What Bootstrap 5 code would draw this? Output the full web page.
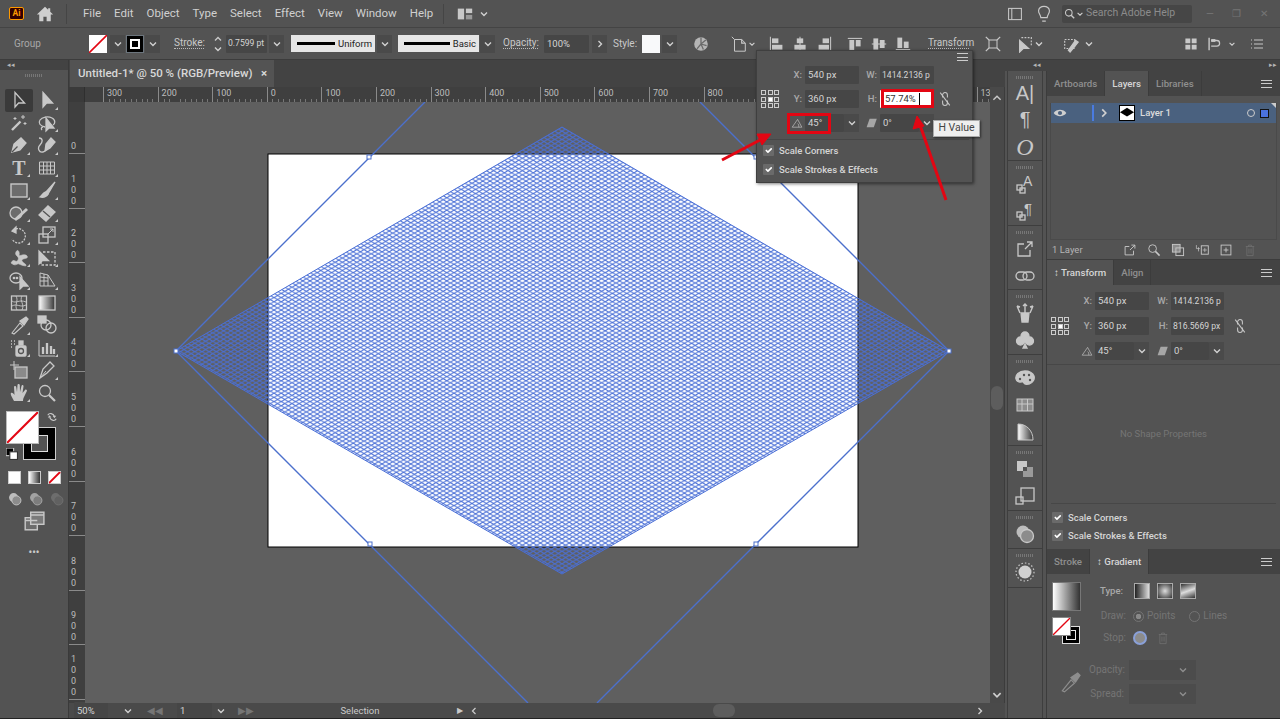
<!DOCTYPE html>
<html lang="en"><head><meta charset="utf-8"><title>Adobe Illustrator</title>
<link href="https://cdn.jsdelivr.net/npm/bootstrap@5.3.0/dist/css/bootstrap.min.css" rel="stylesheet">
<style>
html,body{margin:0;background:#535353}
body{font-family:Roboto,"Liberation Sans",sans-serif;font-size:10px;color:#c9c9c9;line-height:1;overflow:hidden}
.app{position:relative;width:1280px;height:719px;overflow:hidden;background:#535353;border-bottom:1px solid #222}
.flex-none{flex:none}
svg{display:block;flex:none}
.i{width:20px;height:20px;fill:none;stroke:#c8c8c8;stroke-width:1.3;color:#c8c8c8}
.s12{width:12px;height:12px}.s14{width:14px;height:14px}.s16{width:16px;height:16px}.s18{width:18px;height:18px}.s22{width:22px;height:22px}.s10{width:10px;height:10px}.s8{width:8px;height:8px}
.menubar{height:28px;border-bottom:1px solid #444}
.menu{font-size:11.5px;color:#d0d0d0}
.menu+.menu{margin-left:13px}
.logo{width:15px;height:13px;background:#330000;color:#ff9a00;border:1px solid #ff9a00;border-radius:2px;font-size:8.5px;font-weight:700;margin-left:9px}
.vsep{width:1px;height:20px;background:#454545}
.search{width:130px;height:18px;background:#464646;border-radius:2px;color:#8c8c8c;font-size:10.5px}
.winb{width:88px;padding:0 12px 0 14px}
.ctl{height:32px;border-bottom:1px solid #3c3c3c;font-size:10px}
.dots{border-bottom:1px dotted #bbb}
.fld{background:#464646;color:#d5d5d5;height:18px;border-radius:1px;padding:0 2px 0 3px;font-size:9.5px;white-space:nowrap;overflow:hidden}
.fld.fs9{font-size:8.6px;padding:0 1px 0 2px}
.chev{width:15px;height:18px;background:#4a4a4a}
.sw{width:18px;height:18px;background:#fff}
.stk{height:17px;background:#e6e6e6;color:#222;padding:0 3px 0 6px;font-size:9.5px}
.stk i{display:block;height:3px;background:#000;width:38px}
.stk i.wl{width:46px}
.ml1{margin-left:1px}.ml2{margin-left:2px}.ml3{margin-left:3px}.ml4{margin-left:4px}.ml5{margin-left:5px}.ml6{margin-left:6px}.ml7{margin-left:7px}.ml8{margin-left:8px}.ml9{margin-left:9px}.ml10{margin-left:10px}.ml12{margin-left:12px}.ml14{margin-left:14px}.ml15{margin-left:15px}.ml16{margin-left:16px}.ml17{margin-left:17px}.ml18{margin-left:18px}.ml21{margin-left:21px}.ml25{margin-left:25px}.ml40{margin-left:40px}.ml49{margin-left:49px}
.w15{width:15px}.w24{width:24px}.w26{width:26px}.w30{width:30px}.w34{width:34px}.w35{width:35px}.w41{width:41px}.w45{width:45px}.w81{width:81px}.w84{width:84px}
.main{height:658px}
.tools{width:69px;border-right:1px solid #3a3a3a;background:#535353}
.collapse-bar{height:10px;font-size:7px;color:#b5b5b5;padding:2px 0 0 7px;background:#434343}
.grip{height:3px;width:18px;margin:0 auto;background:repeating-linear-gradient(90deg,#777 0 1px,transparent 1px 2px)}
.tgrid{display:grid;grid-template-columns:28px 28px;grid-auto-rows:22.5px;padding:12px 0 0 5px}
.tc{position:relative;display:flex;align-items:center;justify-content:center}
.tc.on{background:#3a3a3a;border-radius:2px}
.tc.m::after{content:"";position:absolute;right:3px;bottom:2px;border-left:3px solid transparent;border-bottom:3px solid #c8c8c8}
.fs{position:relative;height:54px;margin:7px 0 0 0}
.fs .f{position:absolute;left:6px;top:0;width:33px;height:33px;background:#fff;border:1px solid #bbb;z-index:2}
.fs .k{position:absolute;left:23px;top:16px;width:33px;height:33px;background:#000;border:1px solid #ccc}
.fs .k::after{content:"";position:absolute;inset:7px;background:#535353;border:1px solid #ddd}
.fs .d{position:absolute;left:6px;top:37px;width:11px;height:11px}
.fs .w{position:absolute;left:46px;top:0}
.modes{padding-left:8px;gap:7px}
.mt6px{margin-top:6px}.mt7px{margin-top:7px}.mt3px{margin-top:3px}.mt13px{margin-top:13px}
.mbox{width:13px;height:13px;border:1px solid #ccc}
.mid{background:linear-gradient(90deg,#fff,#333)}
.doc{width:936px;flex:none}
.inner{width:921px;flex:none}
.doctab{height:27px;background:#434343}
.tab-a{width:204px;margin-left:1px;background:#535353;color:#d8d8d8;font-size:11.5px;font-weight:500;padding:0 7px 0 8px;white-space:nowrap}
.ruler-h{height:15px;background:#3f3f3f;overflow:hidden;font-size:9px;color:#bdbdbd}
.corner{width:16px;flex:none;background:#3a3a3a;border-right:1px solid #2f2f2f}
.hpad{width:18px;flex:none}
.hcell{flex:none;width:54.6px;padding:2px 0 0 3px;height:15px;border-left:1px solid #8a8a8a;background:repeating-linear-gradient(90deg,transparent 0 4.5px,#777 4.5px 5.5px) 0 12px/100% 3px no-repeat}
.ruler-v{width:16px;background:#3f3f3f;overflow:hidden;font-size:9px;color:#bdbdbd;flex:none}
.vcell{height:54.6px;border-bottom:1px solid #8a8a8a;padding:0 9px 1px 2px;text-align:center;line-height:11px;flex:none}
.vcell:first-child{height:52px}
.canvas{position:relative;width:905px;flex:none;background:#5f5f5f;overflow:hidden}
.canvas svg{position:absolute;left:0;top:0}
.scroll{width:15px;background:#494949;padding-top:5px;border-right:1px solid #3c3c3c}
.thumb{width:12px;height:24px;margin:282px auto 0;border-radius:6px;background:#5d5d5d}
.sdn{margin:279px auto 0}
.status{height:15px;background:#4a4a4a;font-size:9.5px;color:#c9c9c9}
.selz{width:203px;padding-left:9px;text-align:center}
.sp1{width:234px;flex:none}.sp2{width:240px;flex:none}
.hthumb{width:22px;height:13px;border-radius:6px;background:#5d5d5d;flex:none}
.dock{width:275px}
.dockhead{height:11px;background:#434343;font-size:7px;color:#b5b5b5;padding:2px 3px 0 0}
.strip{width:36px;margin:0 3px 0 2px;border-left:1px solid #3e3e3e;border-right:1px solid #3e3e3e}
.sg{border-bottom:1px solid #3e3e3e;padding-top:5px;gap:7px}
.sg .grip{margin-bottom:-2px}
.h90{height:90px;gap:6px}.h65{height:65px}.h64{height:64px}.h91{height:91px}.h38{height:38px}.h39{height:39px}
.glyph{font-family:"Liberation Serif",serif;color:#c8c8c8;line-height:1}
.gl2{font-family:"Liberation Sans",sans-serif;font-size:20px;color:#c8c8c8;line-height:1}
.panels{width:234px;border-left:1px solid #3c3c3c}
.nav.pt{height:25px;background:#434343;flex-wrap:nowrap;font-size:9.7px}
.pt .nav-link{padding:0 7px;height:25px;display:flex;align-items:center;color:#8f8f8f;font-weight:500;border-right:1px solid #3c3c3c;border-radius:0}
.pt .nav-link.active{background:#535353;color:#d6d6d6}
.burger{width:11px;height:8px;border-top:1px solid #ccc;border-bottom:1px solid #ccc;position:relative}
.burger::after{content:"";position:absolute;left:0;right:0;top:2.5px;border-top:1px solid #ccc}
.lay{height:189px;border-bottom:1px solid #3c3c3c}
.laylist{height:137px;margin:7px 3px 0 3px;border:1px solid #4a4a4a;border-top:0}
.layrow{position:relative;height:20px;background:#4a617f;color:#dcdcdc;font-size:9.5px;font-weight:500}
.layrow::after{content:"";position:absolute;right:0;top:0;border-left:5px solid transparent;border-top:5px solid #ccc}
.bar{width:2px;height:16px;background:#4a7be0}
.thumb2{width:16px;height:16px;border:1px solid #000;background:#fff}
.sel-o{width:8px;height:8px;border:1px solid #ccc;border-radius:50%}
.sel-s{width:9px;height:9px;background:#4a72df;border:1px solid #111;margin-right:7px}
.layfoot{height:19px;font-size:9.5px;color:#b5b5b5}
.tfgrid{display:grid;grid-template-columns:16px 54px 22px 53px;grid-auto-rows:18px;row-gap:7px;align-items:center}
.lab{text-align:right;padding-right:3px;font-size:9.5px;color:#a9a9a9;font-weight:500}
.lab2{display:flex;justify-content:flex-end;align-items:center;padding-right:2px}
.refp{display:grid;grid-template-columns:repeat(3,5px);grid-auto-rows:5px;gap:1.5px;width:18px}
.refp b{display:block;border:1px solid #ccc}
.refp b.c{background:#fff}
.tf{height:289px}
.tfrow{padding:7px 0 0 4px}
.hr1{border-top:1px solid #474747}
.nsp{height:138px;color:#757575;font-size:9.5px}
.chk{gap:5px;font-size:9.5px;color:#d5d5d5;font-weight:500}
.form-check-input.ck{width:11px;height:11px;margin:0;background-color:#6a6a6a;border:0;border-radius:1px;flex:none;opacity:1}
.gr{height:169px}
.gswatch{width:29px;height:29px;background:linear-gradient(90deg,#fff,#333);border:1px solid #777}
.fs2{position:relative;height:28px;margin-top:6px;width:30px}
.fs2 .f{position:absolute;left:0;top:0;width:19px;height:19px;background:#fff;border:1px solid #888;z-index:2}
.fs2 .k{position:absolute;left:10px;top:9px;width:18px;height:18px;background:#000;border:1px solid #ddd}
.fs2 .k::after{content:"";position:absolute;inset:3px;border:1px solid #eee}
.tbtn{width:16px;height:16px;border:1px solid #aaa;margin-right:7px}
.t1{background:linear-gradient(90deg,#222,#ddd)}.t2{background:radial-gradient(#ddd,#333)}.t3{background:linear-gradient(160deg,#333,#ddd 50%,#333)}
.dim{color:#757575}
.rad{width:11px;height:11px;border-radius:50%;border:1px solid #747474}
.rad.on{background:radial-gradient(#8a8a8a 0 2.5px,transparent 3px)}
.stop{width:14px;height:14px;border-radius:50%;border:2px solid #8aa0d8;background:#8c8c8c}
.sel{width:67px;height:20px;background:#4c4c4c;padding-right:8px}
.grow{height:18px}
.dropbox{padding-left:12px}
/* popup */
.pop{position:absolute;left:756px;top:50px;width:217px;height:133px;background:#535353;border:1px solid #3f3f3f;box-shadow:1px 1px 3px rgba(0,0,0,.5);z-index:5}
.pophead{height:15px;padding:2px 4px 0 0}
.popgrid{grid-template-columns:12px 54px 21px 54px;row-gap:6px}
.pophr{margin:7px 3px 5px 3px;border-top:1px solid #474747}
.hot{position:relative}
.h-in{background:#fff;color:#333;padding-left:5px}
.h-in::after{content:"";position:absolute;right:14px;top:3px;bottom:3px;width:1px;background:#000}
.redbox{position:absolute;border:3px solid #e30613;z-index:6}
.rb1{left:787px;top:113px;width:44px;height:21px}
.rb2{left:881px;top:89px;width:53px;height:19px}
.tip{position:absolute;left:933px;top:120px;width:47px;height:17px;background:#eee;color:#444;font-size:10.5px;border:1px solid #aaa;box-shadow:1px 1px 2px rgba(0,0,0,.5);z-index:8}
.ann{position:absolute;left:0;top:0;z-index:7;pointer-events:none}
.nowrap{white-space:nowrap}
.grp{color:#a8a8a8}
.svgt{font-family:"Liberation Sans",sans-serif;fill:#c8c8c8;stroke:none}
</style></head><body>
<svg width="0" height="0" style="position:absolute"><defs>
<linearGradient id="g1"><stop offset="0" stop-color="#fff"/><stop offset="1" stop-color="#333"/></linearGradient>
<symbol id="chev" viewBox="0 0 10 10"><path d="M2 3.500 5 6.500 8 3.500" fill="none" stroke="#d0d0d0" stroke-width="1.400"/></symbol>
<symbol id="chr" viewBox="0 0 10 10"><path d="M3.500 2 6.500 5 3.500 8" fill="none" stroke="#d0d0d0" stroke-width="1.400"/></symbol>
<symbol id="home" viewBox="0 0 20 20"><path d="M10 2 1 10.500h2.600V18h4.600v-5h3.600v5h4.600v-7.500H19L15.800 7.500V3.500h-2.300v1.900z" fill="#cfcfcf" stroke="none"/></symbol>
<symbol id="arrO" viewBox="0 0 20 20"><path d="M6 2.500V17l3.600-4h6z"/></symbol>
<symbol id="arrF" viewBox="0 0 20 20"><path d="M6 2.500V17l3.600-4h6z" fill="#c8c8c8"/></symbol>
<symbol id="wand" viewBox="0 0 20 20"><path d="M3 17 11.500 8.500" stroke-width="2.400"/><path d="M14 2v4M12 4h4M6 4v3M4.500 5.500h3M16 9v3M14.500 10.500h3" stroke-width="1"/></symbol>
<symbol id="lasso" viewBox="0 0 20 20"><path d="M8 14C3 13 1 10 3 7s8-4 12-2 3 6 1 7M6 14c-2 0-2 2-1 3"/><path d="M9 5v13l3-3h5z" fill="#c8c8c8"/></symbol>
<symbol id="pen" viewBox="0 0 20 20"><path d="M3 17 5 9l7-6 5 5-6 7z" fill="#c8c8c8"/><path d="M3 17 8.500 11.500" stroke="#535353"/></symbol>
<symbol id="curv" viewBox="0 0 20 20"><path d="M8 16 9 9l5-6 4 4-5 6z" fill="#c8c8c8"/><path d="M2 3c4 0 4 4 1 7s-1 8 3 7 2-3 4-3" /></symbol>
<symbol id="table" viewBox="0 0 20 20"><path d="M2.500 4h15v12h-15zM2.500 8h15M2.500 12h15M6.500 4v12M10 4v12M13.500 4v12" stroke-width="1"/></symbol>
<symbol id="rect" viewBox="0 0 20 20"><rect x="2" y="4" width="16" height="13" fill="#6c6c6c" stroke-width="1.400"/></symbol>
<symbol id="brush" viewBox="0 0 20 20"><path d="M18 2 9 12l2 2z" fill="#c8c8c8"/><path d="M9 12c-3 0-3 3-6 5 3 1 7 0 8-3z" fill="#c8c8c8"/></symbol>
<symbol id="shaper" viewBox="0 0 20 20"><circle cx="7" cy="10" r="6" fill="#6c6c6c"/><path d="M6 17 18 6" stroke-width="3"/></symbol>
<symbol id="eraser" viewBox="0 0 20 20"><path d="M2 12 11 3l7 6-9 9z" fill="#c8c8c8"/><path d="M6 8l7 6" stroke="#535353"/></symbol>
<symbol id="rot" viewBox="0 0 20 20"><path d="M4 5C10 1 18 6 16 13s-10 6-13 1" stroke-dasharray="2 1.200"/><path d="M7 2 3 6l4 2z" fill="#c8c8c8"/></symbol>
<symbol id="scale" viewBox="0 0 20 20"><rect x="6" y="2" width="12" height="10"/><rect x="2" y="9" width="9" height="9"/><path d="M11 9l5-5M13 4h3v3" stroke-width="1"/></symbol>
<symbol id="warp" viewBox="0 0 20 20"><path d="M2 15c3-6 5 1 7-3s-4-4-2-8 4 1 3 3 6-2 8 1-4 2-5 4 3 3 4 5-5 0-7-1-3 3-8-1z" fill="#c8c8c8" stroke-width=".6"/></symbol>
<symbol id="free" viewBox="0 0 20 20"><path d="M6 4h12v13H4V12" stroke-dasharray="2.500 1.500"/><path d="M2 3v13l3.500-3.500h6z" fill="#c8c8c8"/></symbol>
<symbol id="shape" viewBox="0 0 20 20"><ellipse cx="7" cy="8" rx="6" ry="5"/><circle cx="5" cy="8" r=".7"/><circle cx="8" cy="8" r=".7"/><path d="M11 7v12l3-3h5z" fill="#c8c8c8"/></symbol>
<symbol id="persp" viewBox="0 0 20 20"><path d="M3 3 11 5V16H3zM3 7 11 8M3 11h8M7 4v12M11 5 18 16H11" stroke-width="1"/></symbol>
<symbol id="mesh" viewBox="0 0 20 20"><rect x="2.500" y="3" width="15" height="14" stroke-width="1.300"/><path d="M3 8c4 3 7-2 14 1M3 13c5-3 8 2 14-1M7 3c3 5-2 9 1 14M13 3c-3 5 3 8 0 14" stroke-width=".9"/></symbol>
<symbol id="grad" viewBox="0 0 20 20"><rect x="2" y="3" width="16" height="14" fill="url(#g1)"/></symbol>
<symbol id="drop" viewBox="0 0 20 20"><path d="M3 18 11 8l3 3-9 8z" stroke-width="1.100"/><path d="M11 6 17 2l2 2-4 6z" fill="#c8c8c8"/></symbol>
<symbol id="blend" viewBox="0 0 20 20"><rect x="1" y="1" width="8" height="7" fill="#c8c8c8"/><circle cx="9" cy="10" r="5"/><circle cx="14" cy="13" r="5"/></symbol>
<symbol id="spray" viewBox="0 0 20 20"><rect x="7" y="8" width="10" height="10" rx="1" fill="#c8c8c8"/><circle cx="12" cy="13" r="2.500" stroke="#535353"/><rect x="10" y="3" width="4" height="4" fill="#c8c8c8"/><path d="M2 3h1M5 3h1M2 6h1M5 6h1M2 9h1" stroke-width="1.400"/></symbol>
<symbol id="graph" viewBox="0 0 20 20"><path d="M2 2v16h16" stroke-width="1"/><path d="M6 16V9M10 16V5M14 16V8M17 16v-5" stroke-width="2.300"/></symbol>
<symbol id="abd" viewBox="0 0 20 20"><rect x="6" y="7" width="12" height="11" fill="#8a8a8a"/><path d="M5 1v9M1 5h9" stroke-width="1"/></symbol>
<symbol id="slice" viewBox="0 0 20 20"><path d="M3 18 6 9l7-7 4 4-7 7z"/><path d="M3 18 9 11" stroke-width="1"/></symbol>
<symbol id="hand" viewBox="0 0 20 20"><path d="M5 18C3 14 1 11 2 10s3 1 3.500 2L5 4c0-1.500 2-1.500 2.200 0L8 9l.5-7c0-1.500 2.200-1.500 2.300 0L11 9l1.500-6c.4-1.500 2.300-1 2 .5L13.500 10l2.500-3c1-1 2.500 0 1.800 1.300L15 14c-1 2-1 3-1 4z" fill="#c8c8c8" stroke="none"/></symbol>
<symbol id="zoom" viewBox="0 0 20 20"><circle cx="8" cy="8" r="5.500"/><path d="M12 12 18 18" stroke-width="2.200"/></symbol>
<symbol id="swap" viewBox="0 0 20 20"><path d="M3 7C5 3 12 3 14 9M17 13c-2 4-8 4-11-2" stroke-width="2"/><path d="M11 8h6l-3 4zM9 11H3l3-4z" fill="#c8c8c8" stroke="none"/></symbol>
<symbol id="screen" viewBox="0 0 20 20"><rect x="2" y="7" width="11" height="11" fill="#6c6c6c"/><rect x="7" y="2" width="12" height="11" fill="#7a7a7a"/><path d="M2 9.500h11M7 4.500h12"/></symbol>
<symbol id="link" viewBox="0 0 20 20"><path d="M7 8V5a3 3 0 0 1 6 0v3M7 12v3a3 3 0 0 0 6 0v-3" stroke-width="1.300"/><path d="M4 2 16 18" stroke-width="1.300"/></symbol>
<symbol id="layA" viewBox="0 0 20 20"><rect x="2" y="11" width="5" height="5"/><rect x="5" y="14" width="5" height="5"/><text class="svgt" x="8" y="12" font-size="14">A</text></symbol>
<symbol id="layP" viewBox="0 0 20 20"><rect x="2" y="11" width="5" height="5"/><rect x="5" y="14" width="5" height="5"/><text class="svgt" x="9" y="13" font-size="15">&#182;</text></symbol>
<symbol id="popout" viewBox="0 0 20 20"><path d="M15 11v6H3V5h6M10 10 17 3M12 3h5v5" stroke-width="1.300"/></symbol>
<symbol id="chain" viewBox="0 0 20 20"><rect x="1" y="6" width="11" height="8" rx="4"/><rect x="8" y="6" width="11" height="8" rx="4"/></symbol>
<symbol id="puppet" viewBox="0 0 20 20"><path d="M6 10h8l-1 9H7z" fill="#c8c8c8"/><path d="M5 10 2 3M10 10V1M15 10l3-7M2 3l3 1M18 3l-3 1M8 3l2-2 2 2" stroke-width="1.400"/></symbol>
<symbol id="club" viewBox="0 0 20 20"><circle cx="10" cy="6" r="4" fill="#c8c8c8"/><circle cx="5.500" cy="11" r="4" fill="#c8c8c8"/><circle cx="14.500" cy="11" r="4" fill="#c8c8c8"/><path d="M10 8v6l-2 4h4l-2-4" fill="#c8c8c8"/></symbol>
<symbol id="palette" viewBox="0 0 20 20"><path d="M10 3C4 3 0 7 1 11c.5 3 5 4 7 2 1 3 3 4 6 3 4-1 6-5 5-8s-5-5-9-5z" fill="#c8c8c8"/><circle cx="5" cy="11" r="1.200" fill="#535353" stroke="none"/><circle cx="9" cy="7" r="1.200" fill="#535353" stroke="none"/><circle cx="14" cy="7" r="1.200" fill="#535353" stroke="none"/><circle cx="15" cy="12" r="1.200" fill="#535353" stroke="none"/></symbol>
<symbol id="swatch" viewBox="0 0 20 20"><rect x="2" y="4" width="16" height="12" fill="#8c8c8c" stroke-width="1"/><path d="M2 9h16M7 4v12M12.500 4v12" stroke-width="1"/></symbol>
<symbol id="quarter" viewBox="0 0 20 20"><path d="M3 2v16h15C18 9 12 2 3 2z" fill="url(#g1)" stroke-width="1"/></symbol>
<symbol id="over" viewBox="0 0 20 20"><rect x="2" y="2" width="10" height="10" fill="#c8c8c8" stroke="none"/><rect x="8" y="8" width="10" height="10" fill="#9a9a9a" stroke="none"/><rect x="8" y="8" width="4" height="4" fill="#535353" stroke="none"/></symbol>
<symbol id="ab2" viewBox="0 0 20 20"><rect x="6" y="2" width="13" height="13"/><rect x="1" y="11" width="7" height="7" /></symbol>
<symbol id="circ" viewBox="0 0 20 20"><circle cx="8" cy="8" r="6.500" fill="#bdbdbd" stroke="none"/><circle cx="12" cy="12" r="6.500" fill="#8c8c8c" stroke="#c8c8c8"/></symbol>
<symbol id="sun" viewBox="0 0 20 20"><circle cx="10" cy="10" r="6.500" fill="#d0d0d0" stroke="none"/><circle cx="10" cy="10" r="9" stroke-dasharray="1.500 2" stroke-width="1.200"/></symbol>
<symbol id="trash" viewBox="0 0 20 20"><path d="M4 5h12M8 5V3h4v2M5.500 5v13h9V5M8.500 8v7M11.500 8v7" stroke-width="1.100"/></symbol>
<symbol id="newl" viewBox="0 0 20 20"><rect x="3" y="3" width="14" height="14"/><path d="M10 6.500v7M6.500 10h7"/></symbol>
<symbol id="subl" viewBox="0 0 20 20"><rect x="9" y="4" width="10" height="12"/><path d="M14 7v6M11 10h6M2 3v5h5M5 6v6" stroke-width="1"/></symbol>
<symbol id="clip" viewBox="0 0 20 20"><rect x="2" y="2" width="11" height="11" fill="#8c8c8c"/><rect x="7" y="7" width="11" height="11"/></symbol>
<symbol id="panelw" viewBox="0 0 20 20"><rect x="2" y="3" width="16" height="14"/><path d="M6 3v14" /></symbol>
<symbol id="bulb" viewBox="0 0 20 20"><path d="M6.500 14C6 10 3.500 9.500 4 6c.5-3 3-4.500 6-4.500S15.500 3 16 6c.5 3.500-2 4-2.500 8zM8 18h4" stroke-width="1.300"/></symbol>
<symbol id="mag" viewBox="0 0 20 20"><circle cx="8" cy="8" r="5.500" stroke-width="1.800"/><path d="M12 12 17 17" stroke-width="2.300"/></symbol>
<symbol id="globe" viewBox="0 0 20 20"><circle cx="10" cy="10" r="8.500" fill="#b5b5b5" stroke="none"/><path d="M10 2v8M10 10l6-5M10 10l7 2M10 10l3 7M10 10l-5 6" stroke="#6a6a6a" stroke-width="1.600"/></symbol>
<symbol id="docic" viewBox="0 0 20 20"><path d="M5 5h8l4 4v9H5zM2 2l3 3" stroke-width="1.100"/><path d="M13 5v4h4"/></symbol>
<symbol id="al1" viewBox="0 0 20 20"><path d="M3 1v18" stroke-width="1.300"/><rect x="5" y="3" width="8" height="6" fill="#c8c8c8" stroke="none"/><rect x="5" y="11" width="13" height="6" fill="#c8c8c8" stroke="none"/></symbol>
<symbol id="al2" viewBox="0 0 20 20"><path d="M10 1v18" stroke-width="1.300"/><rect x="6" y="3" width="8" height="6" fill="#c8c8c8" stroke="none"/><rect x="3" y="11" width="14" height="6" fill="#c8c8c8" stroke="none"/></symbol>
<symbol id="al3" viewBox="0 0 20 20"><path d="M17 1v18" stroke-width="1.300"/><rect x="7" y="3" width="8" height="6" fill="#c8c8c8" stroke="none"/><rect x="2" y="11" width="13" height="6" fill="#c8c8c8" stroke="none"/></symbol>
<symbol id="al4" viewBox="0 0 20 20"><path d="M1 3h18" stroke-width="1.300"/><rect x="3" y="5" width="6" height="13" fill="#c8c8c8" stroke="none"/><rect x="11" y="5" width="6" height="8" fill="#c8c8c8" stroke="none"/></symbol>
<symbol id="al5" viewBox="0 0 20 20"><path d="M1 10h18" stroke-width="1.300"/><rect x="3" y="3" width="6" height="14" fill="#c8c8c8" stroke="none"/><rect x="11" y="5" width="6" height="10" fill="#c8c8c8" stroke="none"/></symbol>
<symbol id="al6" viewBox="0 0 20 20"><path d="M1 17h18" stroke-width="1.300"/><rect x="3" y="2" width="6" height="13" fill="#c8c8c8" stroke="none"/><rect x="11" y="7" width="6" height="8" fill="#c8c8c8" stroke="none"/></symbol>
<symbol id="tf1" viewBox="0 0 20 20"><rect x="5" y="5" width="10" height="10"/><path d="M1 1l4 4M19 1l-4 4M1 19l4-4M19 19l-4-4" stroke-width="1.500"/></symbol>
<symbol id="tf2" viewBox="0 0 20 20"><path d="M6 3h11v9" stroke-dasharray="2 1.500"/><path d="M4 6v13l4-4h6z" fill="#c8c8c8"/></symbol>
<symbol id="tf3" viewBox="0 0 20 20"><rect x="3" y="5" width="11" height="10" stroke-dasharray="2 1.500"/><path d="M7 17l8-11 3 2-9 11z" fill="#c8c8c8"/></symbol>
<symbol id="g4" viewBox="0 0 20 20"><path d="M9 2v7H2V2zM18 2v7h-7V2zM9 11v7H2v-7zM18 11v7h-7v-7z" fill="#c8c8c8" stroke="none"/></symbol>
<symbol id="g5" viewBox="0 0 20 20"><path d="M3 1v18" stroke-width="2"/><rect x="6" y="3" width="6" height="4" fill="#c8c8c8" stroke="none"/><path d="M6 5h8a4 4 0 0 1 0 8H6" stroke-width="1.800"/></symbol>
<symbol id="eye" viewBox="0 0 20 20"><path d="M1 10c4-6 14-6 18 0-4 6-14 6-18 0z" fill="#cfcfcf" stroke="none"/><circle cx="10" cy="10" r="3" fill="#4a617f" stroke="none"/></symbol>
<symbol id="lw" viewBox="0 0 20 20"><rect x="2" y="4" width="7" height="12" fill="#c8c8c8" stroke="none"/><rect x="11" y="4" width="7" height="5" fill="#c8c8c8" stroke="none"/><rect x="11" y="11" width="7" height="5" fill="#999" stroke="none"/></symbol>
<symbol id="anglei" viewBox="0 0 20 20"><path d="M2 17h16L11 4zM11 11c2 1 2 4 2 6" stroke-width="1.100"/></symbol>
<symbol id="sheari" viewBox="0 0 20 20"><path d="M6 3h12l-5 14H1z" fill="#a6a6a6" stroke="none"/></symbol>
</defs></svg>

<div class="app d-flex flex-column">
 <!-- menu bar -->
 <div class="menubar d-flex align-items-center flex-none">
  <div class="logo d-flex align-items-center justify-content-center">Ai</div>
  <svg class="i s18 ml12"><use href="#home"/></svg>
  <div class="vsep ml12"></div>
  <div class="d-flex ml16"><span class="menu">File</span><span class="menu">Edit</span><span class="menu">Object</span><span class="menu">Type</span><span class="menu">Select</span><span class="menu">Effect</span><span class="menu">View</span><span class="menu">Window</span><span class="menu">Help</span></div>
  <div class="vsep ml10"></div>
  <svg class="i s18 ml12"><use href="#lw"/></svg>
  <svg class="i s10 ml5"><use href="#chev"/></svg>
  <div class="flex-grow-1"></div>
  <svg class="i s16"><use href="#panelw"/></svg>
  <svg class="i s18 ml12"><use href="#bulb"/></svg>
  <div class="search d-flex align-items-center ml9"><svg class="i s12 ml2"><use href="#mag"/></svg><svg class="i s8"><use href="#chev"/></svg><span class="ml2">Search Adobe Help</span></div>
  <div class="winb d-flex align-items-center justify-content-between dim"><span>&#8212;</span><span>&#10064;</span><span>&#10005;</span></div>
 </div>
 <!-- control bar -->
 <div class="ctl d-flex align-items-center flex-none">
  <span class="ml14 w26 grp text-nowrap">Group</span>
  <div class="sw ml49"><svg viewBox="0 0 18 18" class="s18"><path d="M0 18 18 0" stroke="#e30613" stroke-width="1.600"/></svg></div>
  <div class="chev ml3 d-flex align-items-center justify-content-center"><svg class="i s10"><use href="#chev"/></svg></div>
  <div class="sw ml1 d-flex align-items-center justify-content-center bg-black border border-secondary"><svg viewBox="0 0 10 10" class="s10"><rect x="1" y="1" width="8" height="8" fill="none" stroke="#fff" stroke-width="2"/></svg></div>
  <div class="chev ml1 d-flex align-items-center justify-content-center"><svg class="i s10"><use href="#chev"/></svg></div>
  <span class="ml14 w30 dots">Stroke:</span>
  <div class="ml6 w15 d-flex flex-column align-items-center"><svg class="i s10" viewBox="0 0 10 10" ><path d="M2 6.500 5 3.500 8 6.500" stroke-width="1.400"/></svg><svg class="i s10"><use href="#chev"/></svg></div>
  <div class="fld fs9 ml1 w41 d-flex align-items-center">0.7599 pt</div>
  <div class="chev ml2 d-flex align-items-center justify-content-center"><svg class="i s10"><use href="#chev"/></svg></div>
  <div class="stk ml7 w84 d-flex align-items-center justify-content-between"><i></i><span>Uniform</span></div>
  <div class="chev ml2 d-flex align-items-center justify-content-center"><svg class="i s10"><use href="#chev"/></svg></div>
  <div class="stk ml6 w81 d-flex align-items-center justify-content-between"><i class="wl"></i><span>Basic</span></div>
  <div class="chev ml1 d-flex align-items-center justify-content-center"><svg class="i s10"><use href="#chev"/></svg></div>
  <span class="ml8 w35 dots">Opacity:</span>
  <div class="fld ml6 w45 d-flex align-items-center">100%</div>
  <div class="chev ml3 d-flex align-items-center justify-content-center"><svg class="i s10"><use href="#chr"/></svg></div>
  <span class="ml6 w24">Style:</span>
  <div class="sw ml5 bg-light"></div>
  <div class="chev ml2 d-flex align-items-center justify-content-center"><svg class="i s10"><use href="#chev"/></svg></div>
  <svg class="i s16 ml16"><use href="#globe"/></svg>
  <svg class="i s18 ml21"><use href="#docic"/></svg><svg class="i s8"><use href="#chev"/></svg>
  <svg class="i s16 ml12"><use href="#al1"/></svg><svg class="i s16 ml8"><use href="#al2"/></svg><svg class="i s16 ml9"><use href="#al3"/></svg>
  <svg class="i s16 ml14"><use href="#al4"/></svg><svg class="i s16 ml8"><use href="#al5"/></svg><svg class="i s16 ml8"><use href="#al6"/></svg>
  <span class="ml17 w41 dots text-nowrap">Transform</span>
  <svg class="i s16 ml16"><use href="#tf1"/></svg>
  <svg class="i s18 ml15"><use href="#tf2"/></svg><svg class="i s10"><use href="#chev"/></svg>
  <svg class="i s18 ml18"><use href="#tf3"/></svg><svg class="i s10 ml4"><use href="#chev"/></svg>
  <div class="flex-grow-1"></div>
  <svg class="i s14"><use href="#g4"/></svg>
  <svg class="i s14 ml9"><use href="#g5"/></svg><svg class="i s8 ml7"><use href="#chev"/></svg>
  <svg class="i s14 ml14 me-3" viewBox="0 0 14 14"><path d="M1 3h1M4 3h9M1 7h1M4 7h9M1 11h1M4 11h9" stroke-width="1.200"/></svg>
 </div>

 <div class="main d-flex flex-none">
  <!-- tools -->
  <div class="tools flex-none">
   <div class="collapse-bar">&#9666;&#9666;</div>
   <div class="grip mt-1"></div>
   <div class="tgrid">
    <div class="tc on"><svg class="i"><use href="#arrO"/></svg></div><div class="tc m"><svg class="i"><use href="#arrF"/></svg></div>
    <div class="tc"><svg class="i"><use href="#wand"/></svg></div><div class="tc m"><svg class="i"><use href="#lasso"/></svg></div>
    <div class="tc m"><svg class="i"><use href="#pen"/></svg></div><div class="tc m"><svg class="i"><use href="#curv"/></svg></div>
    <div class="tc m"><span class="glyph fw-bold fs-5">T</span></div><div class="tc m"><svg class="i"><use href="#table"/></svg></div>
    <div class="tc m"><svg class="i"><use href="#rect"/></svg></div><div class="tc m"><svg class="i"><use href="#brush"/></svg></div>
    <div class="tc m"><svg class="i"><use href="#shaper"/></svg></div><div class="tc m"><svg class="i"><use href="#eraser"/></svg></div>
    <div class="tc m"><svg class="i"><use href="#rot"/></svg></div><div class="tc m"><svg class="i"><use href="#scale"/></svg></div>
    <div class="tc m"><svg class="i"><use href="#warp"/></svg></div><div class="tc m"><svg class="i"><use href="#free"/></svg></div>
    <div class="tc m"><svg class="i"><use href="#shape"/></svg></div><div class="tc m"><svg class="i"><use href="#persp"/></svg></div>
    <div class="tc"><svg class="i"><use href="#mesh"/></svg></div><div class="tc"><svg class="i"><use href="#grad"/></svg></div>
    <div class="tc m"><svg class="i"><use href="#drop"/></svg></div><div class="tc"><svg class="i"><use href="#blend"/></svg></div>
    <div class="tc m"><svg class="i"><use href="#spray"/></svg></div><div class="tc m"><svg class="i"><use href="#graph"/></svg></div>
    <div class="tc"><svg class="i"><use href="#abd"/></svg></div><div class="tc m"><svg class="i"><use href="#slice"/></svg></div>
    <div class="tc m"><svg class="i"><use href="#hand"/></svg></div><div class="tc"><svg class="i"><use href="#zoom"/></svg></div>
   </div>
   <div class="fs">
    <div class="f"><svg viewBox="0 0 33 33" width="31" height="31"><path d="M0 33 33 0" stroke="#e30613" stroke-width="2.200"/></svg></div>
    <div class="k"></div>
    <svg class="w i s12"><use href="#swap"/></svg>
    <div class="d"><svg viewBox="0 0 11 11" class="s12"><rect x="0" y="0" width="7" height="7" fill="#000" stroke="#ccc"/><rect x="3.500" y="3.500" width="7" height="7" fill="#fff" stroke="#333"/></svg></div>
   </div>
   <div class="modes d-flex mt6px"><div class="mbox bg-white"></div><div class="mbox mid"></div><div class="mbox bg-white"><svg viewBox="0 0 13 13" class="s12"><path d="M0 12 12 0" stroke="#e30613" stroke-width="2"/></svg></div></div>
   <div class="modes d-flex mt-2"><svg class="i s14"><use href="#circ"/></svg><svg class="i s14 opacity-75"><use href="#circ"/></svg><svg class="i s14 opacity-25"><use href="#circ"/></svg></div>
   <div class="d-flex justify-content-center mt-1"><svg class="i s22"><use href="#screen"/></svg></div>
   <div class="text-center fw-bold mt-3">&#8226;&#8226;&#8226;</div>
  </div>

  <!-- document -->
  <div class="doc d-flex flex-column">
   <div class="doctab d-flex flex-none"><div class="tab-a d-flex align-items-center justify-content-between"><span>Untitled-1* @ 50 % (RGB/Preview)</span><span class="fw-bold">&#215;</span></div></div>
   <div class="d-flex flex-grow-1">
    <div class="inner d-flex flex-column">
     <div class="ruler-h d-flex flex-none">
      <div class="corner"></div><div class="hpad"></div>
      <div class="hcell">300</div><div class="hcell">200</div><div class="hcell">100</div><div class="hcell">0</div><div class="hcell">100</div><div class="hcell">200</div><div class="hcell">300</div><div class="hcell">400</div><div class="hcell">500</div><div class="hcell">600</div><div class="hcell">700</div><div class="hcell">800</div><div class="hcell"></div><div class="hcell"></div><div class="hcell"></div><div class="hcell"></div><div class="hcell">13</div>
     </div>
     <div class="d-flex flex-grow-1">
      <div class="ruler-v d-flex flex-column">
       <div class="vcell d-flex flex-column justify-content-end">0</div>
       <div class="vcell d-flex flex-column justify-content-end"><span>1</span><span>0</span><span>0</span></div><div class="vcell d-flex flex-column justify-content-end"><span>2</span><span>0</span><span>0</span></div><div class="vcell d-flex flex-column justify-content-end"><span>3</span><span>0</span><span>0</span></div><div class="vcell d-flex flex-column justify-content-end"><span>4</span><span>0</span><span>0</span></div><div class="vcell d-flex flex-column justify-content-end"><span>5</span><span>0</span><span>0</span></div><div class="vcell d-flex flex-column justify-content-end"><span>6</span><span>0</span><span>0</span></div><div class="vcell d-flex flex-column justify-content-end"><span>7</span><span>0</span><span>0</span></div><div class="vcell d-flex flex-column justify-content-end"><span>8</span><span>0</span><span>0</span></div><div class="vcell d-flex flex-column justify-content-end"><span>9</span><span>0</span><span>0</span></div><div class="vcell d-flex flex-column justify-content-end"><span>1</span><span>0</span><span>0</span><span>0</span></div>
      </div>
      <div class="canvas">
       <svg width="905" height="601" viewBox="85 102 905 601">
        <defs><pattern id="hatch" patternUnits="userSpaceOnUse" x="562" y="127" width="7.200" height="4.160"><path d="M0 0 7.200 4.160M0 4.160 7.200 0" stroke="#4a6fd6" stroke-width=".95" fill="none"/></pattern></defs>
        <rect x="268" y="154" width="590" height="393" fill="#fff" stroke="#000"/>
        <polygon points="176,351 562,127 949,351 562,574" fill="url(#hatch)" stroke="#4a6fd6"/>
        <path d="M176 351 425 102M949 351 700 102M176 351 528 703M949 351 597 703" stroke="#4c70cc" stroke-width="1.400" fill="none"/>
        <g fill="#fff" stroke="#4c70cc"><rect x="367" y="155" width="4" height="4"/><rect x="754" y="155" width="4" height="4"/><rect x="368" y="542" width="4" height="4"/><rect x="754" y="542" width="4" height="4"/><rect x="174" y="349" width="4" height="4"/><rect x="947" y="349" width="4" height="4"/></g>
       </svg>
      </div>
     </div>
    </div>
    <div class="scroll flex-none"><svg class="i s12 mx-auto" viewBox="0 0 10 10"><path d="M2 6.500 5 3.500 8 6.500" stroke-width="1.200"/></svg><div class="thumb"></div><svg class="i s12 sdn"><use href="#chev"/></svg></div>
   </div>
   <div class="status d-flex align-items-center flex-none">
    <div class="fld ml5 w34 d-flex align-items-center">50%</div><svg class="i s10 ml15"><use href="#chev"/></svg>
    <span class="ml14 dim">&#9664;&#9664;</span><div class="fld ml14 w35 d-flex align-items-center">1</div><svg class="i s10 ml4"><use href="#chev"/></svg>
    <span class="ml12 dim">&#9654;&#9654;</span>
    <span class="selz nowrap">Selection</span>
    <span class="small">&#9654;</span><svg class="i s10 ml6" viewBox="0 0 10 10"><path d="M6.500 2 3.500 5 6.500 8"/></svg>
    <div class="sp1"></div>
    <div class="hthumb"></div>
    <div class="sp2"></div>
    <svg class="i s10"><use href="#chr"/></svg>
   </div>
  </div>

  <!-- dock -->
  <div class="dock flex-none d-flex flex-column">
   <div class="dockhead d-flex justify-content-between flex-none"><span class="ms-4 ps-1">&#9666;&#9666;</span><span>&#9656;&#9656;</span></div>
   <div class="d-flex flex-grow-1">
    <div class="strip flex-none">
     <div class="sg h90 d-flex flex-column align-items-center"><div class="grip"></div><span class="gl2">A|</span><span class="gl2">&#182;</span><span class="glyph fs-4 fst-italic">O</span></div>
     <div class="sg h65 d-flex flex-column align-items-center"><div class="grip"></div><svg class="i"><use href="#layA"/></svg><svg class="i"><use href="#layP"/></svg></div>
     <div class="sg h64 d-flex flex-column align-items-center"><div class="grip"></div><svg class="i"><use href="#popout"/></svg><svg class="i"><use href="#chain"/></svg></div>
     <div class="sg h65 d-flex flex-column align-items-center"><div class="grip"></div><svg class="i"><use href="#puppet"/></svg><svg class="i"><use href="#club"/></svg></div>
     <div class="sg h91 d-flex flex-column align-items-center"><div class="grip"></div><svg class="i"><use href="#palette"/></svg><svg class="i"><use href="#swatch"/></svg><svg class="i"><use href="#quarter"/></svg></div>
     <div class="sg h65 d-flex flex-column align-items-center"><div class="grip"></div><svg class="i"><use href="#over"/></svg><svg class="i"><use href="#ab2"/></svg></div>
     <div class="sg h38 d-flex flex-column align-items-center"><div class="grip"></div><svg class="i"><use href="#circ"/></svg></div>
     <div class="sg h39 d-flex flex-column align-items-center"><div class="grip"></div><svg class="i"><use href="#sun"/></svg></div>
    </div>
    <div class="panels flex-none">
     <div class="lay">
      <div class="nav pt align-items-center"><a class="nav-link">Artboards</a><a class="nav-link active">Layers</a><a class="nav-link">Libraries</a><div class="flex-grow-1"></div><div class="burger me-2"></div></div>
      <div class="laylist">
       <div class="layrow d-flex align-items-center"><svg class="i s14 ml2"><use href="#eye"/></svg><div class="bar ml25"></div><svg class="i s12 ml4"><use href="#chr"/></svg><div class="thumb2 ml9 d-flex"><svg viewBox="0 0 16 16" class="s14"><path d="M0 7 8 2l8 5-8 5z" fill="#000"/></svg></div><span class="ml5">Layer 1</span><div class="flex-grow-1"></div><div class="sel-o"></div><div class="sel-s ml5"></div></div>
      </div>
      <div class="layfoot d-flex align-items-center"><span class="ml5">1 Layer</span><svg class="i s14 ml40"><use href="#popout"/></svg><svg class="i s14 ml10"><use href="#zoom"/></svg><svg class="i s14 ml10"><use href="#clip"/></svg><svg class="i s14 ml10"><use href="#subl"/></svg><svg class="i s14 ml10"><use href="#newl"/></svg><svg class="i s14 ml10 opacity-25"><use href="#trash"/></svg></div>
     </div>
     <div class="tf">
      <div class="nav pt align-items-center"><a class="nav-link active">&#8597; Transform</a><a class="nav-link">Align</a><div class="flex-grow-1"></div><div class="burger me-2"></div></div>
      <div class="d-flex align-items-center tfrow">
       <div class="refp"><b></b><b></b><b></b><b></b><b class="c"></b><b></b><b></b><b></b><b></b></div>
       <div class="tfgrid ml10">
        <div class="lab">X:</div><div class="fld d-flex align-items-center">540 px</div><div class="lab">W:</div><div class="fld fs9 d-flex align-items-center">1414.2136 p</div>
        <div class="lab">Y:</div><div class="fld d-flex align-items-center">360 px</div><div class="lab">H:</div><div class="fld fs9 d-flex align-items-center">816.5669 px</div>
        <div class="lab2"><svg class="i s12"><use href="#anglei"/></svg></div><div class="d-flex"><div class="fld flex-grow-1 d-flex align-items-center">45&#176;</div><div class="chev d-flex align-items-center justify-content-center"><svg class="i s10"><use href="#chev"/></svg></div></div><div class="lab2"><svg class="i s12"><use href="#sheari"/></svg></div><div class="d-flex"><div class="fld flex-grow-1 d-flex align-items-center">0&#176;</div><div class="chev d-flex align-items-center justify-content-center"><svg class="i s10"><use href="#chev"/></svg></div></div>
       </div>
       <svg class="i s16 ml8"><use href="#link"/></svg>
      </div>
      <div class="hr1 mt-1"></div>
      <div class="nsp d-flex align-items-center justify-content-center">No Shape Properties</div>
      <div class="hr1 mx-1"></div>
      <div class="chk d-flex align-items-center ml5 mt-2"><input class="form-check-input ck" type="checkbox" checked>Scale Corners</div>
      <div class="chk d-flex align-items-center ml5 mt7px"><input class="form-check-input ck" type="checkbox" checked>Scale Strokes &amp; Effects</div>
     </div>
     <div class="gr">
      <div class="nav pt align-items-center"><a class="nav-link">Stroke</a><a class="nav-link active">&#8597; Gradient</a><div class="flex-grow-1"></div><div class="burger me-2"></div></div>
      <div class="d-flex ps-1 pt-1">
       <div class="flex-none w30 ml1">
        <div class="gswatch mt-1"></div>
        <div class="fs2"><div class="f"><svg viewBox="0 0 19 19" width="17" height="17"><path d="M0 19 19 0" stroke="#e30613" stroke-width="1.500"/></svg></div><div class="k"></div></div>
       </div>
       <div class="flex-grow-1 ml10">
        <div class="grow d-flex align-items-center mt-1"><span class="w30 lab ms-1 text-end">Type:</span><div class="tbtn t1 ml8"></div><div class="tbtn t2"></div><div class="tbtn t3"></div></div>
        <div class="grow d-flex align-items-center mt7px dim"><span class="w30 ms-1 text-end">Draw:</span><div class="rad on ml7"></div><span class="ml3">Points</span><div class="rad ml14"></div><span class="ml3">Lines</span></div>
        <div class="grow d-flex align-items-center mt-1 dim"><span class="w30 ms-1 text-end">Stop:</span><div class="stop ml7"></div><svg class="i s14 ml9 opacity-25"><use href="#trash"/></svg></div>
       </div>
      </div>
      <div class="d-flex align-items-center dropbox mt13px">
       <svg class="i s22 opacity-50"><use href="#drop"/></svg>
       <div class="ms-2 dim">
        <div class="d-flex align-items-center"><span class="w35 text-end">Opacity:</span><div class="sel ml5 d-flex align-items-center justify-content-end"><svg class="i s10 opacity-50"><use href="#chev"/></svg></div></div>
        <div class="d-flex align-items-center mt-1"><span class="w35 text-end">Spread:</span><div class="sel ml5 d-flex align-items-center justify-content-end"><svg class="i s10 opacity-50"><use href="#chev"/></svg></div></div>
       </div>
      </div>
     </div>
    </div>
   </div>
  </div>
 </div>

 <!-- transform popup -->
 <div class="pop">
  <div class="pophead d-flex justify-content-end"><div class="burger"></div></div>
  <div class="d-flex align-items-center ps-1">
   <div class="refp"><b></b><b></b><b></b><b></b><b class="c"></b><b></b><b></b><b></b><b></b></div>
   <div class="tfgrid popgrid ml14">
    <div class="lab">X:</div><div class="fld d-flex align-items-center">540 px</div><div class="lab">W:</div><div class="fld fs9 d-flex align-items-center">1414.2136 p</div>
    <div class="lab">Y:</div><div class="fld d-flex align-items-center">360 px</div><div class="lab">H:</div><div class="fld hot h-in d-flex align-items-center">57.74%</div>
    <div class="lab2"><svg class="i s12"><use href="#anglei"/></svg></div><div class="d-flex"><div class="fld flex-grow-1 d-flex align-items-center">45&#176;</div><div class="chev d-flex align-items-center justify-content-center"><svg class="i s10"><use href="#chev"/></svg></div></div><div class="lab2"><svg class="i s12"><use href="#sheari"/></svg></div><div class="d-flex"><div class="fld flex-grow-1 d-flex align-items-center">0&#176;</div><div class="chev d-flex align-items-center justify-content-center"><svg class="i s10"><use href="#chev"/></svg></div></div>
   </div>
   <svg class="i s16 ml3"><use href="#link"/></svg>
  </div>
  <div class="pophr"></div>
  <div class="chk d-flex align-items-center ml6"><input class="form-check-input ck" type="checkbox" checked>Scale Corners</div>
  <div class="chk d-flex align-items-center ml6 mt-2"><input class="form-check-input ck" type="checkbox" checked>Scale Strokes &amp; Effects</div>
 </div>
 <div class="redbox rb1"></div><div class="redbox rb2"></div>
 <div class="tip d-flex align-items-center justify-content-center">H Value</div>
 <svg class="ann" width="1280" height="719"><g fill="#e30613" stroke="#e30613" stroke-width="3"><path d="M722 160 760 140M946 200 920 125" fill="none"/><path d="M771 134 757 134 762 145z" stroke-width="1"/><path d="M917 116 913 129 924 126z" stroke-width="1"/></g></svg>
</div>
<script src="https://cdn.jsdelivr.net/npm/bootstrap@5.3.0/dist/js/bootstrap.bundle.min.js"></script>
</body></html>
